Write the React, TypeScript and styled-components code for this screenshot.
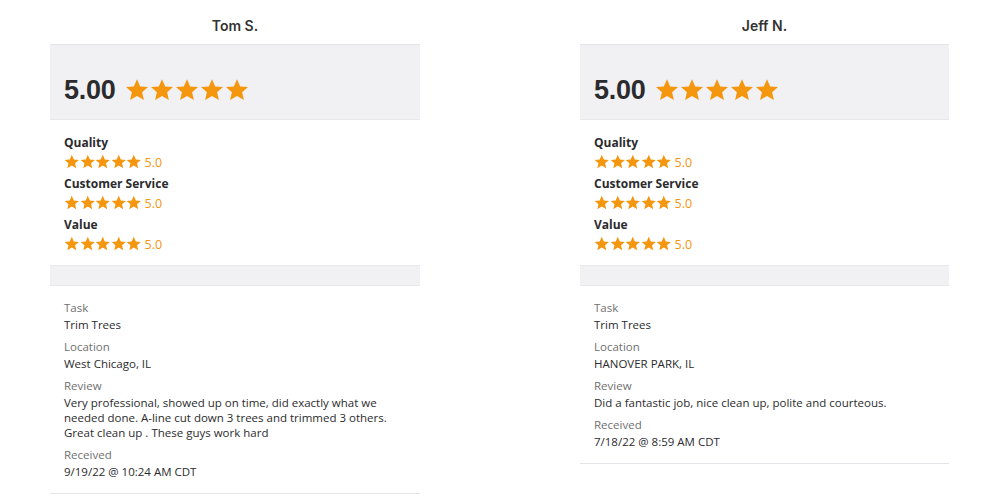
import React from "react";
import styled, { createGlobalStyle } from "styled-components";

const Global = createGlobalStyle`
  html, body { margin: 0; padding: 0; background: #fff; }
  body { font-family: "Liberation Sans", Arial, sans-serif; color: #2d2d2d; }
`;

const Page = styled.div`
  width: 1000px;
  height: 500px;
  box-sizing: border-box;
  padding: 0 51px 0 50px;
  display: grid;
  grid-template-columns: 370px 369px;
  justify-content: space-between;
  align-items: start;
  overflow: hidden;
`;

const Column = styled.div`
  display: flex;
  flex-direction: column;
`;

const Name = styled.div`
  height: 44px;
  display: flex;
  align-items: center;
  justify-content: center;
  padding-top: 6px;
  box-sizing: border-box;
  font-family: Inter, "Liberation Sans", sans-serif;
  font-size: 14px;
  font-weight: 600;
  color: #333;
`;

const ScoreBox = styled.div`
  height: 76px;
  box-sizing: border-box;
  background: #f1f1f4;
  border-top: 1px solid #e4e4e8;
  border-bottom: 1px solid #e8e8ec;
  display: flex;
  align-items: center;
  gap: 10px;
  padding: 16px 14px 0;
`;

const Score = styled.span`
  font-family: "Liberation Sans", Arial, sans-serif;
  font-weight: 700;
  font-size: 27px;
  letter-spacing: -0.3px;
  color: #2b2b2e;
`;

const StarRow = styled.div<{ $gap: number }>`
  display: flex;
  align-items: center;
  gap: ${(p) => p.$gap}px;
`;

const Ratings = styled.div`
  padding: 15px 14px 13px;
  display: flex;
  flex-direction: column;
`;

const RatingLabel = styled.div`
  font-family: "Open Sans", sans-serif;
  font-weight: 700;
  font-size: 12px;
  line-height: 16px;
  color: #2b2b2e;
  margin-bottom: 3px;
`;

const RatingLine = styled.div`
  display: flex;
  align-items: center;
  gap: 3px;
  height: 16px;
  margin-bottom: 6px;
  &:last-child { margin-bottom: 0; }
`;

const RatingValue = styled.span`
  font-family: "Open Sans", sans-serif;
  font-size: 12.5px;
  color: #f5960f;
  font-weight: 500;
`;

const Band = styled.div`
  height: 21px;
  background: #f1f1f4;
  border-top: 1px solid #e8e8ec;
  border-bottom: 1px solid #e8e8ec;
  box-sizing: border-box;
`;

const Details = styled.div`
  padding: 13px 14px 14px;
  border-bottom: 1px solid #e4e4e8;
  display: flex;
  flex-direction: column;
  gap: 6px;
`;

const Field = styled.div`
  display: flex;
  flex-direction: column;
`;

const FieldLabel = styled.div`
  font-family: "Open Sans", sans-serif;
  font-size: 11.5px;
  line-height: 17px;
  color: #707070;
  margin-bottom: 1px;
`;

const FieldValue = styled.div`
  font-family: "Open Sans", sans-serif;
  font-size: 11.5px;
  line-height: 15px;
  color: #2b2b2e;
`;

const Star = ({ size }: { size: number }) => (
  <svg width={size} height={size} viewBox="0 0 24 24">
    <path
      d="M12 1.2l3.2 7.2 7.8.7-5.9 5.2 1.8 7.7L12 17.9 5.1 22l1.8-7.7L1 9.1l7.8-.7z"
      fill="#f5960f"
    />
  </svg>
);

const Stars = ({ size, gap }: { size: number; gap: number }) => (
  <StarRow $gap={gap}>
    {[0, 1, 2, 3, 4].map((i) => (
      <Star key={i} size={size} />
    ))}
  </StarRow>
);

type Review = {
  name: string;
  task: string;
  location: string;
  review: string;
  received: string;
};

const reviews: Review[] = [
  {
    name: "Tom S.",
    task: "Trim Trees",
    location: "West Chicago, IL",
    review:
      "Very professional, showed up on time, did exactly what we needed done. A-line cut down 3 trees and trimmed 3 others. Great clean up . These guys work hard",
    received: "9/19/22 @ 10:24 AM CDT",
  },
  {
    name: "Jeff N.",
    task: "Trim Trees",
    location: "HANOVER PARK, IL",
    review: "Did a fantastic job, nice clean up, polite and courteous.",
    received: "7/18/22 @ 8:59 AM CDT",
  },
];

const categories = ["Quality", "Customer Service", "Value"];

const ReviewText = styled(FieldValue)`
  max-width: 330px;
`;

export default function App() {
  return (
    <>
      <Global />
      <Page>
        {reviews.map((r) => (
          <Column key={r.name}>
            <Name>{r.name}</Name>
            <ScoreBox>
              <Score>5.00</Score>
              <Stars size={24} gap={1} />
            </ScoreBox>
            <Ratings>
              {categories.map((c) => (
                <React.Fragment key={c}>
                  <RatingLabel>{c}</RatingLabel>
                  <RatingLine>
                    <Stars size={15.5} gap={0} />
                    <RatingValue>5.0</RatingValue>
                  </RatingLine>
                </React.Fragment>
              ))}
            </Ratings>
            <Band />
            <Details>
              <Field>
                <FieldLabel>Task</FieldLabel>
                <FieldValue>{r.task}</FieldValue>
              </Field>
              <Field>
                <FieldLabel>Location</FieldLabel>
                <FieldValue>{r.location}</FieldValue>
              </Field>
              <Field>
                <FieldLabel>Review</FieldLabel>
                <ReviewText>{r.review}</ReviewText>
              </Field>
              <Field>
                <FieldLabel>Received</FieldLabel>
                <FieldValue>{r.received}</FieldValue>
              </Field>
            </Details>
          </Column>
        ))}
      </Page>
    </>
  );
}
